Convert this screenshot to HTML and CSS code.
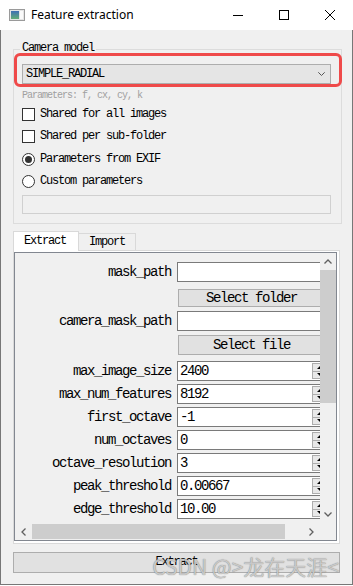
FILE: index.html
```html
<!DOCTYPE html>
<html lang="en">
<head>
    <meta charset="UTF-8">
    <title>Feature extraction</title>
    <link rel="stylesheet" href="styles.css">
</head>
<body>
<div class="window">
    <div class="title-bar">
        <svg class="app-icon" width="16" height="12" viewBox="0 0 16 12">
            <defs>
                <linearGradient id="icon-grad" x1="0" y1="0" x2="0" y2="1">
                    <stop offset="0" stop-color="#3f6fb5"/>
                    <stop offset="1" stop-color="#62ad74"/>
                </linearGradient>
            </defs>
            <rect x="0.5" y="0.5" width="15" height="11" fill="#e4e4e4" stroke="#9a9a9a"/>
            <rect x="2" y="2" width="8" height="8" fill="url(#icon-grad)"/>
            <rect x="11" y="2" width="3" height="8" fill="#fafafa"/>
        </svg>
        <span class="title">Feature extraction</span>
        <div class="caption-btns">
            <div class="caption-btn">
                <svg width="10" height="10" viewBox="0 0 10 10"><path d="M0 5.5H10" stroke="#000" stroke-width="1"/></svg>
            </div>
            <div class="caption-btn">
                <svg width="10" height="10" viewBox="0 0 10 10"><rect x="0.5" y="0.5" width="9" height="9" fill="none" stroke="#000"/></svg>
            </div>
            <div class="caption-btn">
                <svg width="10" height="10" viewBox="0 0 10 10"><path d="M0 0L10 10M10 0L0 10" stroke="#000" stroke-width="1"/></svg>
            </div>
        </div>
    </div>

    <div class="client">
        <div class="group">
            <div class="group-title">Camera model</div>
            <div class="combo">
                <span>SIMPLE_RADIAL</span>
                <svg width="7" height="4" viewBox="0 0 7 4"><path d="M0.3 0.3L3.5 3.5L6.7 0.3" fill="none" stroke="#555" stroke-width="1"/></svg>
            </div>
            <p class="hint">Parameters: f, cx, cy, k</p>
            <div class="check first"><span class="box"></span>Shared for all images</div>
            <div class="check"><span class="box"></span>Shared per sub-folder</div>
            <div class="check radio spaced"><span class="box on"></span>Parameters from EXIF</div>
            <div class="check radio"><span class="box"></span>Custom parameters</div>
            <div class="edit-disabled"></div>
        </div>

        <div class="tab-bar">
            <div class="tab active">Extract</div>
            <div class="tab import">Import</div>
        </div>
        <div class="pane">
            <div class="scroll">
                <div class="viewport">
                    <div class="form">
                        <div class="row r-edit"><span class="label">mask_path</span><div class="edit"></div></div>
                        <div class="row r-btn1"><span class="label"></span><div class="btn">Select folder</div></div>
                        <div class="row r-edit2"><span class="label">camera_mask_path</span><div class="edit"></div></div>
                        <div class="row r-btn2"><span class="label"></span><div class="btn">Select file</div></div>
                        <div class="row"><span class="label">max_image_size</span><div class="edit spin"><span class="val">2400</span><span class="arrows"><i class="up"></i><i class="down"></i></span></div></div>
                        <div class="row"><span class="label">max_num_features</span><div class="edit spin"><span class="val">8192</span><span class="arrows"><i class="up"></i><i class="down"></i></span></div></div>
                        <div class="row"><span class="label">first_octave</span><div class="edit spin"><span class="val">-1</span><span class="arrows"><i class="up"></i><i class="down"></i></span></div></div>
                        <div class="row"><span class="label">num_octaves</span><div class="edit spin"><span class="val">0</span><span class="arrows"><i class="up"></i><i class="down"></i></span></div></div>
                        <div class="row"><span class="label">octave_resolution</span><div class="edit spin"><span class="val">3</span><span class="arrows"><i class="up"></i><i class="down"></i></span></div></div>
                        <div class="row"><span class="label">peak_threshold</span><div class="edit spin"><span class="val">0.00667</span><span class="arrows"><i class="up"></i><i class="down"></i></span></div></div>
                        <div class="row"><span class="label">edge_threshold</span><div class="edit spin"><span class="val">10.00</span><span class="arrows"><i class="up"></i><i class="down"></i></span></div></div>
                        <div class="row"><span class="label"></span><span class="box"></span></div>
                    </div>
                </div>
                <div class="vbar">
                    <div class="sb-arrow"><svg width="8" height="5" viewBox="0 0 8 5"><path d="M0.5 4.5L4 1L7.5 4.5" fill="none" stroke="#606060" stroke-width="1.3"/></svg></div>
                    <div class="thumb"></div>
                    <div class="fill"></div>
                    <div class="sb-arrow"><svg width="8" height="5" viewBox="0 0 8 5"><path d="M0.5 0.5L4 4L7.5 0.5" fill="none" stroke="#606060" stroke-width="1.3"/></svg></div>
                </div>
                <div class="hbar">
                    <div class="sb-arrow"><svg width="5" height="8" viewBox="0 0 5 8"><path d="M4.5 0.5L1 4L4.5 7.5" fill="none" stroke="#606060" stroke-width="1.3"/></svg></div>
                    <div class="thumb"></div>
                    <div class="fill"></div>
                    <div class="sb-arrow"><svg width="5" height="8" viewBox="0 0 5 8"><path d="M0.5 0.5L4 4L0.5 7.5" fill="none" stroke="#606060" stroke-width="1.3"/></svg></div>
                </div>
                <div class="corner"></div>
            </div>
        </div>

        <div class="run-btn">Extract</div>
    </div>

    <div class="highlight"></div>
    <div class="watermark">CSDN @&gt;龙在天涯&lt;</div>
</div>
</body>
</html>
```

FILE: styles.css
```css
/* reset */
*{box-sizing:border-box}
body,div,p{margin:0;padding:0}
body{background:#fff;font-family:"Liberation Mono","Noto Sans CJK SC",monospace;font-size:12px;letter-spacing:-1.2px;color:#000}
i{font-style:normal}
/* //reset */

.window{
    position:relative;
    width:353px;
    height:585px;
}
.title-bar{
    display:flex;
    align-items:center;
    height:30px;
    background:#fff;
    font-family:"Noto Sans",sans-serif;
    letter-spacing:0;
}
.app-icon{
    display:block;
    margin-left:9px;
}
.title{
    margin-left:6px;
    font-size:12px;
    line-height:30px;
}
.caption-btns{
    display:flex;
    margin-left:auto;
}
.caption-btn{
    display:flex;
    align-items:center;
    justify-content:center;
    width:46px;
    height:30px;
}
.caption-btn svg{display:block}

.client{
    height:555px;
    padding-top:19px;
    background:#f0f0f0;
    border:1px solid #777;
    border-top:0;
}

/* camera model group */
.group{
    margin:0 10px 0 12px;
    padding:0 10px 9px 8px;
    border:1px solid #dcdcdc;
}
.group-title{
    width:fit-content;
    margin:-8px 0 0 -2px;
    padding:0 2px;
    line-height:12px;
    background:#f0f0f0;
}
.combo{
    display:flex;
    align-items:center;
    justify-content:space-between;
    height:20px;
    margin-top:10px;
    padding:0 5px 0 3px;
    border:1px solid #adadad;
    background:#e5e5e5;
}
.combo svg{display:block}
.hint{
    margin-top:6px;
    font-size:10px;
    letter-spacing:-1px;
    line-height:12px;
    color:#a0a0a0;
}
.check{
    display:flex;
    align-items:center;
    gap:5px;
    height:13px;
    margin-top:9px;
    line-height:13px;
}
.check.first{margin-top:6px}
.check.spaced{margin-top:10px}
.box{
    flex:none;
    width:13px;
    height:13px;
    border:1px solid #333;
    background:#fff;
}
.radio .box{
    display:flex;
    align-items:center;
    justify-content:center;
    border-radius:50%;
}
.radio .box.on::after{
    content:"";
    width:7px;
    height:7px;
    border-radius:50%;
    background:#333;
}
.edit-disabled{
    height:19px;
    margin-top:7px;
    border:1px solid #d0d0d0;
    background:#f0f0f0;
}

/* tabs */
.tab-bar{
    display:flex;
    align-items:flex-end;
    height:19px;
    margin:7px 0 0 12px;
}
.tab{
    border:1px solid #d9d9d9;
    border-bottom:0;
}
.tab.active{
    position:relative;
    z-index:1;
    height:20px;
    margin-bottom:-1px;
    padding:0 12px 0 10px;
    line-height:18px;
    background:#fff;
}
.tab.import{
    height:17px;
    padding:0 10px;
    line-height:16px;
    border-left:0;
    background:#f0f0f0;
}
.pane{
    width:327px;
    height:294px;
    margin-left:12px;
    padding:1px 2px 2px 0;
    border:1px solid #d9d9d9;
    background:#fff;
}
.scroll{
    display:grid;
    grid-template-columns:305px 16px;
    grid-template-rows:270px 17px;
    height:289px;
    border:1px solid #828790;
    background:#f0f0f0;
}
.viewport{overflow:hidden}

/* form */
.form{
    width:340px;
    padding:9px 0 0 6px;
    font-size:14px;
    letter-spacing:-1.4px;
}
.row{
    display:flex;
    align-items:center;
    height:20px;
    margin-bottom:3px;
}
.row.r-edit{margin-bottom:7px}
.row.r-btn1{height:18px;margin-bottom:4px}
.row.r-edit2{margin-bottom:4px}
.row.r-btn2{margin-bottom:6px}
.label{
    flex:none;
    width:150px;
    margin-right:6px;
    text-align:right;
    white-space:nowrap;
}
.edit{
    flex:none;
    width:152px;
    height:100%;
    padding-left:2px;
    border:1px solid #7a7a7a;
    background:#fff;
    line-height:18px;
}
.edit.spin{
    display:flex;
    justify-content:space-between;
}
.arrows{
    display:flex;
    flex-direction:column;
    width:17px;
    padding:1px;
}
.arrows i{
    display:flex;
    align-items:center;
    justify-content:center;
    flex:1;
    border:1px solid #adadad;
    background:#e8e8e8;
}
.arrows i + i{border-top:0}
.arrows .up::after{
    content:"";
    border-left:3px solid transparent;
    border-right:3px solid transparent;
    border-bottom:3px solid #000;
}
.arrows .down::after{
    content:"";
    border-left:3px solid transparent;
    border-right:3px solid transparent;
    border-top:3px solid #000;
}
.btn{
    display:flex;
    align-items:center;
    justify-content:center;
    flex:none;
    width:147px;
    height:100%;
    margin-left:1px;
    border:1px solid #adadad;
    background:#e1e1e1;
}

/* scroll bars */
.vbar{
    display:flex;
    flex-direction:column;
}
.sb-arrow{
    display:flex;
    align-items:center;
    justify-content:center;
    flex:none;
    height:17px;
}
.sb-arrow svg{display:block}
.vbar .thumb{
    height:133px;
    background:#cdcdcd;
}
.fill{flex:1}
.hbar{display:flex}
.hbar .sb-arrow{
    width:17px;
    height:auto;
}
.hbar .thumb{
    width:253px;
    margin:1px 0;
    background:#cdcdcd;
}

.run-btn{
    width:327px;
    height:21px;
    margin:8px 0 0 12px;
    border:1px solid #adadad;
    background:#e1e1e1;
    text-align:center;
    line-height:19px;
}

/* overlays */
.highlight{
    position:absolute;
    left:14px;
    top:53px;
    width:328px;
    height:34px;
    border:3px solid #ef4a4a;
    border-radius:6px;
}
.watermark{
    position:absolute;
    right:14px;
    top:554px;
    font-family:"Noto Sans CJK SC",sans-serif;
    font-size:21px;
    letter-spacing:0;
    line-height:24px;
    color:rgba(215,215,215,0.85);
    text-shadow:0 0 1px rgba(80,80,80,0.8);
}
```
